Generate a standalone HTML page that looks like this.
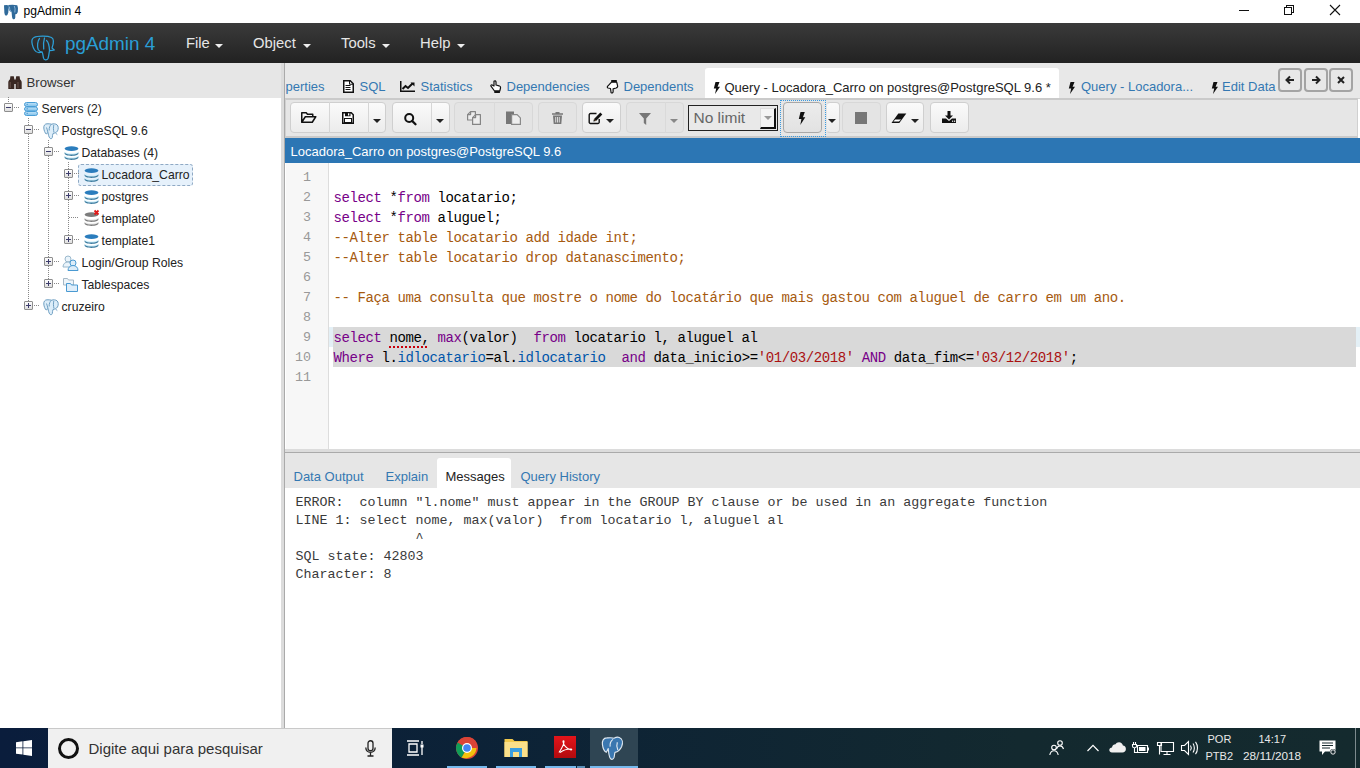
<!DOCTYPE html>
<html><head><meta charset="utf-8">
<style>
*{box-sizing:border-box}
html,body{margin:0;padding:0;width:1360px;height:768px;overflow:hidden;background:#fff;font-family:"Liberation Sans",sans-serif;color:#222}
.a{position:absolute}
.t{position:absolute;white-space:nowrap;line-height:1}
svg{position:absolute;overflow:visible}
/* title bar */
#title{left:0;top:0;width:1360px;height:23px;background:#fff}
/* navbar */
#nav{left:0;top:23px;width:1360px;height:40px;background:linear-gradient(#3a3a3a,#222)}
.menu{color:#e6e6e6;font-size:14.8px;top:13px}
.caret{position:absolute;width:0;height:0;border-left:4px solid transparent;border-right:4px solid transparent;border-top:4px solid #eee}
/* left */
#lhead{left:0;top:63px;width:281px;height:35px;background:#e6e6e6}
#tree{left:0;top:98px;width:281px;height:630px;background:#fff}
.node{font-size:12.2px;color:#222;position:absolute;white-space:nowrap;line-height:1}
.box{position:absolute;width:9px;height:9px;border:1px solid #8e8e8e;border-radius:1px;background:linear-gradient(#fdfdfd,#dedede)}
.box:before{content:"";position:absolute;left:1px;top:3px;width:5px;height:1px;background:#3c3c6c}
.box.p:after{content:"";position:absolute;left:3px;top:1px;width:1px;height:5px;background:#3c3c6c}
.vd{position:absolute;width:1px;background:repeating-linear-gradient(#888 0 1px,transparent 1px 2px)}
.hd{position:absolute;height:1px;background:repeating-linear-gradient(90deg,#888 0 1px,transparent 1px 2px)}
#split{left:281px;top:63px;width:4px;height:665px;background:#dcdcdc;border-right:1px solid #aaa}
/* right */
#tabs{left:285px;top:63px;width:1075px;height:36px;background:#e8e8e8;border-bottom:1px solid #d2d2d2}
.tab{color:#3478b2;font-size:13px;top:80px}
#tb{left:285px;top:98px;width:1073px;height:40px;background:#e6e6e6;border:1px solid #d0d0d0;border-top:2px solid #cacaca;border-bottom:2px solid #cacaca}
.btn{position:absolute;top:102px;height:31px;border:1px solid #cfcfcf;background:linear-gradient(#fafafa,#ececec);border-radius:4px}
.btn.dis{background:#e4e4e4;border-color:#d8d8d8}
.sep{position:absolute;top:102px;width:1px;height:31px;background:#d6d6d6}
.dcaret{position:absolute;width:0;height:0;border-left:4px solid transparent;border-right:4px solid transparent;border-top:4px solid #333}
#blue{left:285px;top:138px;width:1075px;height:25px;background:#2c76b4;color:#fff;font-size:13px}
#editor{left:285px;top:163px;width:1075px;height:286px;background:#fff}
#gutter{left:286px;top:163px;width:43px;height:286px;background:#f7f7f7;border-right:1px solid #ddd}
.code{position:absolute;left:333.5px;font-family:"Liberation Mono",monospace;font-size:14px;letter-spacing:-0.4px;line-height:20px;white-space:pre;color:#000}
.ln{position:absolute;white-space:pre;left:285px;width:26px;text-align:right;font-family:"Liberation Mono",monospace;font-size:13.33px;line-height:20px;color:#999}
.kw{color:#708}.cm{color:#a65a10}.st{color:#a11}.v2{color:#05a}
#sel{left:333px;top:327px;width:1023px;height:40px;background:#d9d9d9}
#rsplit{left:285px;top:449px;width:1075px;height:4px;background:#dcdcdc;border-bottom:1px solid #aaa}
#rtabs{left:285px;top:453px;width:1075px;height:35px;background:#e6e6e6}
.rtab{font-size:13px;color:#3478b2;top:470px}
#msgs{left:285px;top:488px;width:1075px;height:240px;background:#fff}
.msg{position:absolute;left:295.5px;font-family:"Liberation Mono",monospace;font-size:13.33px;line-height:18px;white-space:pre;color:#3a3a3a}
/* taskbar */
#task{left:0;top:728px;width:1360px;height:40px;background:linear-gradient(90deg,#0a1d3c 0%,#0c2237 35%,#13292f 75%,#142a2e 100%)}
#search{left:48px;top:728px;width:344px;height:40px;background:#f0f0f0;border-top:1px solid #c9c9c9}
.tray{color:#e8e8e8;font-size:11px}
</style></head><body>

<!-- TITLE BAR -->
<div id="title" class="a">
  <svg style="left:2.5px;top:3.5px" width="16" height="16" viewBox="0 0 16 16"><g fill="#2f6a9a"><path d="M1 1.3Q4 0.4 5.8 1.5L5.3 8.5Q4.6 11.8 3 11.8 1.8 11.8 1.4 9z"/><path d="M5.5 1Q10 0.2 14.3 1.2 15.6 4 14.8 8 14 10.5 12.3 10.2V13.5Q12 15.6 10.2 15.3 9 14.8 9 12.5L8.6 8.3Q6 7.2 5.5 4z"/></g><path d="M6.4 2.6Q6.3 6 8.3 8M11.3 2Q12.6 4.5 11.8 8.5" fill="none" stroke="#8fb8dc" stroke-width="0.9"/></svg>
  <div class="t" style="left:23.5px;top:5px;font-size:12.1px;color:#000">pgAdmin 4</div>
  <div class="a" style="left:1239px;top:10px;width:10px;height:1px;background:#111"></div>
  <div class="a" style="left:1286px;top:5px;width:8px;height:8px;border:1px solid #111;background:#fff"></div>
  <div class="a" style="left:1284px;top:7px;width:8px;height:8px;border:1px solid #111;background:#fff"></div>
  <svg style="left:1330px;top:5px" width="10" height="10" viewBox="0 0 10 10"><path d="M0 0L10 10M10 0L0 10" stroke="#111" stroke-width="1.1"/></svg>
</div>

<!-- NAVBAR -->
<div id="nav" class="a">
  <svg style="left:30.5px;top:12.5px" width="24" height="25" viewBox="0 0 24 25"><g fill="none" stroke="#2d9fd6" stroke-width="1.25" stroke-linejoin="round" stroke-linecap="round"><path d="M3 1.5C6 0 16-0.5 20.5 1.5 23 3 22.5 8 21 12L23.3 14C22 14.5 20 14.5 18.5 14.5 18 17 17.8 20 17 22.5 16 24.5 13 24.5 12.5 22 12 20 12 17.5 11 16 8 17 5 16.5 3.5 14 1.5 11 0.5 6 1 4 1.3 2.8 2 2 3 1.5z"/><path d="M8.5 2.5C6.5 5 6 10 7.2 13.5 8.5 15.5 10 16 11 16M13.5 2C12.5 5 12.3 9 12.7 13M15.5 4.5C17.3 6 18.3 10 18.5 14.5"/></g></svg>
  <div class="t" style="left:65px;top:12px;font-size:18.9px;color:#2a9fd6">pgAdmin 4</div>
  <div class="t menu" style="left:186px">File</div><div class="caret" style="left:215px;top:21px"></div>
  <div class="t menu" style="left:253px">Object</div><div class="caret" style="left:303px;top:21px"></div>
  <div class="t menu" style="left:341px">Tools</div><div class="caret" style="left:382px;top:21px"></div>
  <div class="t menu" style="left:420px">Help</div><div class="caret" style="left:457px;top:21px"></div>
</div>

<!-- LEFT PANEL -->
<div id="lhead" class="a">
  <svg style="left:8px;top:13px" width="14" height="13" viewBox="0 0 14 13"><g fill="#3a2822"><path d="M0.3 13V6.5C0.3 5 1 4 2 3.2L2.4 0.3h3.4L6.3 3V13z"/><path d="M13.7 13V6.5C13.7 5 13 4 12 3.2L11.6 0.3H8.2L7.7 3V13z"/><rect x="6" y="3.5" width="2" height="4.5"/></g><path d="M2.2 6v6M10 6v6" stroke="#6a554c" stroke-width="1"/></svg>
  <div class="t" style="left:26.5px;top:13px;font-size:13.2px;color:#333">Browser</div>
</div>
<div id="tree" class="a"></div>
<div class="a" id="treeitems">
  <!-- dotted lines -->
  <div class="vd" style="left:8px;top:97px;height:6px"></div>
  <div class="vd" style="left:28px;top:118px;height:188px"></div>
  <div class="vd" style="left:48px;top:140px;height:144px"></div>
  <div class="vd" style="left:68px;top:162px;height:78px"></div>
  <!-- Servers -->
  <div class="box" style="left:4px;top:103px"></div><div class="hd" style="left:14px;top:107px;width:5px"></div>
  <svg style="left:24px;top:102px" width="14" height="14" viewBox="0 0 14 14"><defs><linearGradient id="sg" x1="0" x2="0" y1="0" y2="1"><stop offset="0" stop-color="#c4e4f8"/><stop offset="1" stop-color="#7fc0ea"/></linearGradient></defs><g fill="url(#sg)" stroke="#4a9ed6" stroke-width="1"><rect x="0.5" y="0.5" width="13" height="4" rx="2"/><rect x="0.5" y="5" width="13" height="4" rx="2"/><rect x="0.5" y="9.5" width="13" height="4" rx="2"/></g><path d="M2.5 2.3h1.5M2.5 6.8h1.5M2.5 11.3h1.5" stroke="#3a8ac8" stroke-width="0.8"/></svg>
  <div class="node" style="left:41.5px;top:103px">Servers (2)</div>
  <!-- PostgreSQL -->
  <div class="box" style="left:24px;top:125px"></div><div class="hd" style="left:34px;top:129px;width:5px"></div>
  <svg style="left:43px;top:123px" width="16" height="16" viewBox="0 0 16 16"><g fill="#dcedf9" stroke="#6f9fc2" stroke-width="1" stroke-linejoin="round"><path d="M4 0.8C2 0.8 0.6 2.5 0.8 5S2 10 3.2 11L5 9.5C5.3 11.5 5.8 14 7 15.3 7.8 16 9 15.8 9.3 14.5 9.6 13 9.5 11.5 10 10.5 11.8 10.2 13.5 9.5 14.5 8 15.6 6 15.5 3 14 1.8 12.7 0.7 10.5 0.6 8.5 1.2 7 0.7 5.5 0.8 4 0.8z"/><path d="M8.5 1.2C7 2.5 6 4.5 6.2 7.5M10.8 2C10.2 4.5 10.4 7 11 9.5M12.5 10l1.8 1.6M3.5 4.5c0.5 1.5 1 3 1.5 5" fill="none"/></g></svg>
  <div class="node" style="left:61.5px;top:125px">PostgreSQL 9.6</div>
  <!-- Databases -->
  <div class="box" style="left:44px;top:147px"></div><div class="hd" style="left:54px;top:151px;width:5px"></div>
  <svg style="left:64px;top:146px" width="15" height="14" viewBox="0 0 15 14"><ellipse cx="7.5" cy="2.6" rx="6.9" ry="2.3" fill="#2b7dbd"/><path d="M0.6 5.2c0 1.3 3.1 2.2 6.9 2.2s6.9-0.9 6.9-2.2v1.2c0 1.5-3.1 2.5-6.9 2.5S0.6 7.9 0.6 6.4z" fill="#cdeefb"/><path d="M0.6 6.2c0.3 1.4 3.3 2.4 6.9 2.4s6.6-1 6.9-2.4v1.3c0 1.4-3.1 2.4-6.9 2.4S0.6 8.9 0.6 7.5z" fill="#3a7a9e"/><path d="M0.6 9.2c0 1.3 3.1 2.2 6.9 2.2s6.9-0.9 6.9-2.2v1.2c0 1.5-3.1 2.5-6.9 2.5S0.6 11.9 0.6 10.4z" fill="#cdeefb"/><path d="M0.6 10.2c0.3 1.4 3.3 2.4 6.9 2.4s6.6-1 6.9-2.4v1.3c0 1.4-3.1 2.4-6.9 2.4S0.6 12.9 0.6 11.5z" fill="#3a7a9e"/></svg>
  <div class="node" style="left:81.5px;top:147px">Databases (4)</div>
  <!-- Locadora -->
  <div class="a" style="left:78px;top:164px;width:115px;height:22px;background:#e6f1fb;border:1px dashed #8fa9c4;border-radius:3px"></div>
  <div class="box p" style="left:64px;top:169px"></div><div class="hd" style="left:74px;top:173px;width:5px"></div>
  <svg style="left:84px;top:168px" width="15" height="14" viewBox="0 0 15 14"><ellipse cx="7.5" cy="2.6" rx="6.9" ry="2.3" fill="#2b7dbd"/><path d="M0.6 5.2c0 1.3 3.1 2.2 6.9 2.2s6.9-0.9 6.9-2.2v1.2c0 1.5-3.1 2.5-6.9 2.5S0.6 7.9 0.6 6.4z" fill="#cdeefb"/><path d="M0.6 6.2c0.3 1.4 3.3 2.4 6.9 2.4s6.6-1 6.9-2.4v1.3c0 1.4-3.1 2.4-6.9 2.4S0.6 8.9 0.6 7.5z" fill="#3a7a9e"/><path d="M0.6 9.2c0 1.3 3.1 2.2 6.9 2.2s6.9-0.9 6.9-2.2v1.2c0 1.5-3.1 2.5-6.9 2.5S0.6 11.9 0.6 10.4z" fill="#cdeefb"/><path d="M0.6 10.2c0.3 1.4 3.3 2.4 6.9 2.4s6.6-1 6.9-2.4v1.3c0 1.4-3.1 2.4-6.9 2.4S0.6 12.9 0.6 11.5z" fill="#3a7a9e"/></svg>
  <div class="node" style="left:101.5px;top:169px">Locadora_Carro</div>
  <!-- postgres -->
  <div class="box p" style="left:64px;top:191px"></div><div class="hd" style="left:74px;top:195px;width:5px"></div>
  <svg style="left:84px;top:190px" width="15" height="14" viewBox="0 0 15 14"><ellipse cx="7.5" cy="2.6" rx="6.9" ry="2.3" fill="#2b7dbd"/><path d="M0.6 5.2c0 1.3 3.1 2.2 6.9 2.2s6.9-0.9 6.9-2.2v1.2c0 1.5-3.1 2.5-6.9 2.5S0.6 7.9 0.6 6.4z" fill="#cdeefb"/><path d="M0.6 6.2c0.3 1.4 3.3 2.4 6.9 2.4s6.6-1 6.9-2.4v1.3c0 1.4-3.1 2.4-6.9 2.4S0.6 8.9 0.6 7.5z" fill="#3a7a9e"/><path d="M0.6 9.2c0 1.3 3.1 2.2 6.9 2.2s6.9-0.9 6.9-2.2v1.2c0 1.5-3.1 2.5-6.9 2.5S0.6 11.9 0.6 10.4z" fill="#cdeefb"/><path d="M0.6 10.2c0.3 1.4 3.3 2.4 6.9 2.4s6.6-1 6.9-2.4v1.3c0 1.4-3.1 2.4-6.9 2.4S0.6 12.9 0.6 11.5z" fill="#3a7a9e"/></svg>
  <div class="node" style="left:101.5px;top:191px">postgres</div>
  <!-- template0 -->
  <div class="hd" style="left:69px;top:217px;width:10px"></div>
  <svg style="left:84px;top:212px" width="15" height="14" viewBox="0 0 15 14"><ellipse cx="7.5" cy="2.6" rx="6.9" ry="2.3" fill="#7c7c7c"/><path d="M0.6 5.2c0 1.3 3.1 2.2 6.9 2.2s6.9-0.9 6.9-2.2v1.2c0 1.5-3.1 2.5-6.9 2.5S0.6 7.9 0.6 6.4z" fill="#e6e6e6"/><path d="M0.6 6.2c0.3 1.4 3.3 2.4 6.9 2.4s6.6-1 6.9-2.4v1.3c0 1.4-3.1 2.4-6.9 2.4S0.6 8.9 0.6 7.5z" fill="#7a7a7a"/><path d="M0.6 9.2c0 1.3 3.1 2.2 6.9 2.2s6.9-0.9 6.9-2.2v1.2c0 1.5-3.1 2.5-6.9 2.5S0.6 11.9 0.6 10.4z" fill="#e6e6e6"/><path d="M0.6 10.2c0.3 1.4 3.3 2.4 6.9 2.4s6.6-1 6.9-2.4v1.3c0 1.4-3.1 2.4-6.9 2.4S0.6 12.9 0.6 11.5z" fill="#7a7a7a"/><path d="M10.5 -1.5l4 4M14.5 -1.5l-4 4" stroke="#e01818" stroke-width="1.8"/></svg>
  <div class="node" style="left:101.5px;top:213px">template0</div>
  <!-- template1 -->
  <div class="box p" style="left:64px;top:235px"></div><div class="hd" style="left:74px;top:239px;width:5px"></div>
  <svg style="left:84px;top:234px" width="15" height="14" viewBox="0 0 15 14"><ellipse cx="7.5" cy="2.6" rx="6.9" ry="2.3" fill="#2b7dbd"/><path d="M0.6 5.2c0 1.3 3.1 2.2 6.9 2.2s6.9-0.9 6.9-2.2v1.2c0 1.5-3.1 2.5-6.9 2.5S0.6 7.9 0.6 6.4z" fill="#cdeefb"/><path d="M0.6 6.2c0.3 1.4 3.3 2.4 6.9 2.4s6.6-1 6.9-2.4v1.3c0 1.4-3.1 2.4-6.9 2.4S0.6 8.9 0.6 7.5z" fill="#3a7a9e"/><path d="M0.6 9.2c0 1.3 3.1 2.2 6.9 2.2s6.9-0.9 6.9-2.2v1.2c0 1.5-3.1 2.5-6.9 2.5S0.6 11.9 0.6 10.4z" fill="#cdeefb"/><path d="M0.6 10.2c0.3 1.4 3.3 2.4 6.9 2.4s6.6-1 6.9-2.4v1.3c0 1.4-3.1 2.4-6.9 2.4S0.6 12.9 0.6 11.5z" fill="#3a7a9e"/></svg>
  <div class="node" style="left:101.5px;top:235px">template1</div>
  <!-- Login/Group Roles -->
  <div class="box p" style="left:44px;top:257px"></div><div class="hd" style="left:54px;top:261px;width:5px"></div>
  <svg style="left:62px;top:255px" width="18" height="16" viewBox="0 0 18 16"><g fill="#eaf4fb" stroke="#9ab8cc" stroke-width="1"><circle cx="6" cy="4" r="3"/><path d="M1 12c0-3 2-5 5-5s5 2 5 5z"/></g><g fill="#dcecf8" stroke="#4a9ad2" stroke-width="1"><circle cx="11" cy="8" r="3"/><path d="M6 15.5c0-3 2-5 5-5s5 2 5 5z"/></g></svg>
  <div class="node" style="left:81.5px;top:257px">Login/Group Roles</div>
  <!-- Tablespaces -->
  <div class="box p" style="left:44px;top:279px"></div><div class="hd" style="left:54px;top:283px;width:5px"></div>
  <svg style="left:63px;top:277px" width="15" height="15" viewBox="0 0 15 15"><g fill="#eef5fa" stroke="#a6b8c6" stroke-width="1"><path d="M0.5 1.5h4l1 1.5h5v5h-10z"/></g><g fill="#dfeefa" stroke="#4a9ad2" stroke-width="1"><path d="M3.5 6.5h4l1 1.5h6v6.5h-11z"/></g></svg>
  <div class="node" style="left:81.5px;top:279px">Tablespaces</div>
  <!-- cruzeiro -->
  <div class="box p" style="left:24px;top:301px"></div><div class="hd" style="left:34px;top:305px;width:5px"></div>
  <svg style="left:43px;top:299px" width="16" height="16" viewBox="0 0 16 16"><g fill="#dcedf9" stroke="#6f9fc2" stroke-width="1" stroke-linejoin="round"><path d="M4 0.8C2 0.8 0.6 2.5 0.8 5S2 10 3.2 11L5 9.5C5.3 11.5 5.8 14 7 15.3 7.8 16 9 15.8 9.3 14.5 9.6 13 9.5 11.5 10 10.5 11.8 10.2 13.5 9.5 14.5 8 15.6 6 15.5 3 14 1.8 12.7 0.7 10.5 0.6 8.5 1.2 7 0.7 5.5 0.8 4 0.8z"/><path d="M8.5 1.2C7 2.5 6 4.5 6.2 7.5M10.8 2C10.2 4.5 10.4 7 11 9.5M12.5 10l1.8 1.6M3.5 4.5c0.5 1.5 1 3 1.5 5" fill="none"/></g></svg>
  <div class="node" style="left:61.5px;top:301px">cruzeiro</div>
</div>
<div id="split" class="a"></div>

<!-- RIGHT PANEL -->
<div id="tabs" class="a"></div>
<div class="t tab" style="left:285.5px">perties</div>
<svg style="left:343px;top:80px" width="11" height="13" viewBox="0 0 11 13"><path d="M0.75 0.75h6.5l3 3v8.5h-9.5z" fill="#fff" stroke="#111" stroke-width="1.5"/><path d="M2.5 5.5h5M2.5 7.5h5M2.5 9.5h5" stroke="#111" stroke-width="1"/><path d="M6.5 0.75v3.5h3.5" fill="none" stroke="#111" stroke-width="1"/></svg>
<div class="t tab" style="left:359.5px">SQL</div>
<svg style="left:400px;top:81px" width="15" height="11" viewBox="0 0 15 11"><path d="M0.75 0v10.25H15" fill="none" stroke="#111" stroke-width="1.5"/><path d="M2.5 8l3-3 2.5 2 4.5-4.5" fill="none" stroke="#111" stroke-width="2"/><path d="M10.5 1.5h4v4z" fill="#111"/></svg>
<div class="t tab" style="left:420.5px">Statistics</div>
<svg style="left:490px;top:80px" width="12" height="13" viewBox="0 0 12 13"><path d="M4 1.2c0.8-0.8 2-0.3 2 0.8v3l3 0.8c1 0.3 1.8 1.2 1.5 2.2L9.8 11H4.5L1 6.2c-0.6-0.8 0.4-1.8 1.2-1.3L4 6z" fill="#fff" stroke="#111" stroke-width="1.2" stroke-linejoin="round"/><rect x="4.3" y="10.5" width="5.6" height="2.5" fill="#111"/></svg>
<div class="t tab" style="left:506.5px">Dependencies</div>
<svg style="left:607px;top:80px" width="12" height="13" viewBox="0 0 12 13"><rect x="4.2" y="0" width="5.6" height="2.5" fill="#111"/><path d="M4.5 2.2h5.2l0.9 3.6c0.3 1-0.5 1.9-1.5 2.2l-3 0.8v3c0 1.1-1.2 1.6-2 0.8L3.5 8.5 1 8c-0.9-0.4-0.9-1.4-0.2-1.9z" fill="#fff" stroke="#111" stroke-width="1.2" stroke-linejoin="round"/></svg>
<div class="t tab" style="left:623.5px">Dependents</div>
<div class="a" style="left:705px;top:68px;width:354px;height:31px;background:#fff;border-radius:3px 3px 0 0"></div>
<svg style="left:712.5px;top:82px" width="8" height="12" viewBox="0 0 8 12"><path d="M2.5 0h4L4.6 4.8H7L2 12 3.2 6.5H0.8z" fill="#111"/></svg>
<div class="t tab" style="left:724.5px;top:81px;color:#222">Query - Locadora_Carro on postgres@PostgreSQL 9.6 *</div>
<svg style="left:1068px;top:82px" width="8" height="12" viewBox="0 0 8 12"><path d="M2.5 0h4L4.6 4.8H7L2 12 3.2 6.5H0.8z" fill="#111"/></svg>
<div class="t tab" style="left:1081px">Query - Locadora...</div>
<svg style="left:1210.5px;top:82px" width="8" height="12" viewBox="0 0 8 12"><path d="M2.5 0h4L4.6 4.8H7L2 12 3.2 6.5H0.8z" fill="#111"/></svg>
<div class="a" style="left:1222px;top:70px;width:57px;height:28px;overflow:hidden"><div class="t tab" style="left:0;top:10px">Edit Data - Locadora_Carro</div></div>
<div class="a" style="left:1278px;top:68px;width:23.5px;height:23.5px;border:2px solid #a4a4a4;border-radius:4px;background:#e8e8e8"></div>
<svg style="left:1285px;top:75px" width="10" height="10" viewBox="0 0 10 10"><path d="M9 5H2M5 1.5L1.5 5 5 8.5" fill="none" stroke="#222" stroke-width="2"/></svg>
<div class="a" style="left:1304px;top:68px;width:23.5px;height:23.5px;border:2px solid #a4a4a4;border-radius:4px;background:#e8e8e8"></div>
<svg style="left:1311px;top:75px" width="10" height="10" viewBox="0 0 10 10"><path d="M1 5h7M5 1.5L8.5 5 5 8.5" fill="none" stroke="#222" stroke-width="2"/></svg>
<div class="a" style="left:1329px;top:68px;width:23.5px;height:23.5px;border:2px solid #a4a4a4;border-radius:4px;background:#e8e8e8"></div>
<svg style="left:1337px;top:76px" width="8" height="8" viewBox="0 0 8 8"><path d="M1 1l6 6M7 1L1 7" fill="none" stroke="#222" stroke-width="2"/></svg>


<div id="tb" class="a"></div>
<div class="btn" style="left:290px;width:96px;"></div><div class="sep" style="left:328.5px"></div><div class="sep" style="left:367.5px"></div><svg style="left:300.5px;top:112px" width="16" height="11" viewBox="0 0 16 11"><path d="M0.75 10.25V0.75h4.5l1.2 1.5h5.3v2.3M0.75 10.25h10.5l3.5-5.5H4.3z" fill="none" stroke="#111" stroke-width="1.5" stroke-linejoin="round"/></svg><svg style="left:342px;top:112px" width="12" height="12" viewBox="0 0 12 12"><path d="M0.75 0.75h8.5l2 2v8.5H0.75z" fill="#fff" stroke="#111" stroke-width="1.5"/><rect x="3" y="0.75" width="5.5" height="3.5" fill="#111"/><rect x="6" y="1.3" width="1.3" height="2.2" fill="#fff"/><rect x="2.5" y="6.5" width="7" height="4" fill="#fff" stroke="#111" stroke-width="1"/></svg><div class="dcaret" style="left:373px;top:119px;border-top-color:#222"></div><div class="btn" style="left:392px;width:57.5px;"></div><div class="sep" style="left:430.5px"></div><svg style="left:404px;top:113px" width="13" height="12" viewBox="0 0 13 12"><circle cx="5.2" cy="5" r="4" fill="none" stroke="#111" stroke-width="2"/><path d="M8.2 8l3.3 3.3" stroke="#111" stroke-width="2.3" stroke-linecap="round"/></svg><div class="dcaret" style="left:436px;top:119px;border-top-color:#222"></div><div class="btn dis" style="left:454px;width:78.5px;"></div><div class="sep" style="left:493.5px;background:#dadada"></div><svg style="left:467px;top:111px" width="14" height="14" viewBox="0 0 14 14"><g fill="#ededed" stroke="#858585" stroke-width="1.2" stroke-linejoin="round"><path d="M0.6 3.6L3.6 0.6h4.8v8.4H0.6z"/><path d="M3.6 0.6v3H0.6" fill="none"/><path d="M5.6 6.6l3-3h4.8v9.8H5.6z"/><path d="M8.6 3.6v3h-3" fill="none"/></g></svg><svg style="left:505.5px;top:111px" width="15" height="14" viewBox="0 0 15 14"><path d="M0 0.5h8v3H5.5v9.5H0z" fill="#777"/><path d="M5.6 3.6h5.5l3.3 3.3v6.5H5.6z" fill="#eee" stroke="#8a8a8a" stroke-width="1.2"/></svg><div class="btn dis" style="left:537.5px;width:39.5px;"></div><svg style="left:551.5px;top:112px" width="11" height="12" viewBox="0 0 11 12"><path d="M0 1.3h11v1.5H0zM3.5 0h4v1.5h-4z" fill="#777"/><path d="M1 3.5h9l-0.7 8.5H1.7z" fill="#777"/><path d="M3.7 5v5.5M5.5 5v5.5M7.3 5v5.5" stroke="#e4e4e4" stroke-width="0.9"/></svg><div class="btn" style="left:582px;width:38.5px;"></div><svg style="left:588px;top:111.5px" width="15" height="12" viewBox="0 0 15 12"><path d="M8.5 1.5H2.5a1.3 1.3 0 0 0-1.3 1.3v7.4a1.3 1.3 0 0 0 1.3 1.3h7.4a1.3 1.3 0 0 0 1.3-1.3V7" fill="none" stroke="#111" stroke-width="1.4"/><path d="M12.3 0.6l2 2L8 8.9 5.3 9.6 6 6.9z" fill="#111"/><path d="M6.4 7.6l1 1" stroke="#d9a066" stroke-width="1"/></svg><div class="dcaret" style="left:606px;top:119px;border-top-color:#222"></div><div class="btn dis" style="left:625.5px;width:58.5px;"></div><div class="sep" style="left:665px;background:#dadada"></div><svg style="left:639px;top:112.5px" width="12" height="12" viewBox="0 0 12 12"><path d="M0 0h12L7.2 5.5V12L4.8 10V5.5z" fill="#777"/></svg><div class="dcaret" style="left:670px;top:119px;border-top-color:#888"></div><div class="a" style="left:688px;top:105px;width:90px;height:26px;border:1.5px solid #222;background:#e9e9e9"></div><div class="t" style="left:693.5px;top:110px;font-size:15.5px;color:#666">No limit</div><div class="a" style="left:760px;top:108px;width:16px;height:21px;background:#f4f4f4;border-right:2px solid #111;border-bottom:2px solid #111;border-left:1px solid #ddd;border-top:1px solid #ddd"></div><div class="dcaret" style="left:764px;top:116px;border-top-color:#999;border-left-width:4px;border-right-width:4px"></div><div class="a" style="left:780px;top:100px;width:45.5px;height:36.5px;border:1.5px dotted #3a9ae0"></div><div class="btn" style="left:782.5px;width:39.5px;border-color:#a8a8a8;background:linear-gradient(#ececec,#e2e2e2)"></div><svg style="left:797.5px;top:112px" width="8" height="13" viewBox="0 0 8 13"><path d="M2.5 0h4.3L4.9 5.2H7.3L2.3 13 3.4 7.1H0.8z" fill="#111"/></svg><div class="btn" style="left:825.5px;width:14.5px;border-left-color:#e4e4e4"></div><div class="dcaret" style="left:827.5px;top:119px;border-top-color:#222"></div><div class="btn dis" style="left:841.5px;width:39.0px;"></div><div class="a" style="left:855px;top:112px;width:12px;height:12px;background:#777"></div><div class="btn" style="left:886px;width:38px;"></div><svg style="left:891px;top:112.5px" width="16" height="11" viewBox="0 0 16 11"><path d="M7.3 0.5h8L8.3 10H0.5z" fill="#111"/><path d="M4.2 6.6h5.9L7.9 8.6H2.4z" fill="#fff"/></svg><div class="dcaret" style="left:911px;top:119px;border-top-color:#222"></div><div class="btn" style="left:929.5px;width:39.0px;"></div><svg style="left:942px;top:111px" width="14" height="12" viewBox="0 0 14 12"><path d="M5.5 0h3v4.5h2.5L7 8.5 3 4.5h2.5z" fill="#111"/><path d="M0 7.5h4l3 2.5 3-2.5h4V12H0z" fill="#111"/><rect x="10" y="9.6" width="1.2" height="1.2" fill="#fff"/><rect x="12" y="9.6" width="1.2" height="1.2" fill="#fff"/></svg>

<div id="blue" class="a"><div class="t" style="left:5.5px;top:7px">Locadora_Carro on postgres@PostgreSQL 9.6</div></div>

<div id="editor" class="a"></div>
<div id="gutter" class="a"></div>
<div class="a" style="left:329px;top:327px;width:4px;height:20px;background:#e4f0f6"></div><div class="a" style="left:1356px;top:327px;width:4px;height:20px;background:#e4f0f6"></div>
<div id="sel" class="a"></div>
<div class="code" style="top:168px">
<span class="kw">select</span> *<span class="kw">from</span> locatario;
<span class="kw">select</span> *<span class="kw">from</span> aluguel;
<span class="cm">--Alter table locatario add idade int;</span>
<span class="cm">--Alter table locatario drop datanascimento;</span>

<span class="cm">-- Faça uma consulta que mostre o nome do locatário que mais gastou com aluguel de carro em um ano.</span>

<span class="kw">select</span> nome, <span class="kw">max</span>(valor)  <span class="kw">from</span> locatario l, aluguel al
<span class="kw">Where</span> l.<span class="v2">idlocatario</span>=al.<span class="v2">idlocatario</span>  <span class="kw">and</span> data_inicio&gt;=<span class="st">'01/03/2018'</span> <span class="kw">AND</span> data_fim&lt;=<span class="st">'03/12/2018'</span>;
</div>
<div class="ln" style="top:168px">1
2
3
4
5
6
7
8
9
10
11</div>

<div id="rsplit" class="a"></div>
<div id="rtabs" class="a"></div>
<div class="a" style="left:437px;top:458px;width:74px;height:30px;background:#fff;border-radius:3px 3px 0 0"></div>
<div class="t rtab" style="left:293.5px">Data Output</div>
<div class="t rtab" style="left:385.5px">Explain</div>
<div class="t rtab" style="left:445.5px;color:#222">Messages</div>
<div class="t rtab" style="left:520.5px">Query History</div>
<div id="msgs" class="a"></div>
<div class="msg" style="top:494px">ERROR:  column "l.nome" must appear in the GROUP BY clause or be used in an aggregate function
LINE 1: select nome, max(valor)  from locatario l, aluguel al
               ^
SQL state: 42803
Character: 8</div>

<div class="a" style="left:389px;top:346px;width:40px;height:2px;background:repeating-linear-gradient(90deg,#c8000a 0 2px,transparent 2px 4px)"></div>
<!-- TASKBAR -->
<div id="task" class="a"></div>
<div id="search" class="a"></div>
<svg style="left:16px;top:740px" width="16" height="16" viewBox="0 0 16 16"><path d="M0 2.2l6.5-0.9v6.2H0zM7.3 1.2L16 0v7.5H7.3zM0 8.3h6.5v6.3L0 13.8zM7.3 8.3H16V16l-8.7-1.2z" fill="#fff"/></svg>
<div class="a" style="left:58px;top:737.5px;width:21px;height:21px;border:3px solid #111;border-radius:50%"></div>
<div class="t" style="left:88.5px;top:741px;font-size:15px;color:#333">Digite aqui para pesquisar</div>
<svg style="left:365px;top:740px" width="11" height="17" viewBox="0 0 11 17"><rect x="3" y="0.75" width="5" height="10" rx="2.5" fill="none" stroke="#222" stroke-width="1.3"/><path d="M0.8 7.5c0 3 2 4.8 4.7 4.8s4.7-1.8 4.7-4.8M5.5 12.3v3.5M2.5 16h6" fill="none" stroke="#222" stroke-width="1.3"/></svg>
<svg style="left:407px;top:740px" width="17" height="16" viewBox="0 0 17 16"><g fill="none" stroke="#fff" stroke-width="1.3"><path d="M0 1h12M0 15h12M2 4h8v8H2z"/><path d="M15 1v3M15 6v9"/></g><rect x="13.5" y="4.5" width="3" height="3" fill="#fff"/></svg>
<svg style="left:456px;top:737px" width="22" height="22" viewBox="0 0 22 22"><circle cx="11" cy="11" r="11" fill="#db4437"/><path d="M11 11L1.5 5.5A11 11 0 0 1 20.5 5.5z" fill="#db4437"/><path d="M11 11h9.5A11 11 0 0 1 5.5 20.5z" fill="#f4c20d"/><path d="M11 11L5.5 20.5A11 11 0 0 1 1.5 5.5z" fill="#0f9d58"/><circle cx="11" cy="11" r="5" fill="#fff"/><circle cx="11" cy="11" r="3.8" fill="#4285f4"/></svg>
<svg style="left:504px;top:737px" width="24" height="21" viewBox="0 0 24 21"><path d="M0.5 2h8l2 2h13v16h-23z" fill="#f2c94c"/><path d="M0.5 5h23v15h-23z" fill="#fbe08a"/><path d="M6 11h12v9h-3v-5H9v5H6z" fill="#3a9ee0"/><path d="M9 15h6v5H9z" fill="#fbe08a"/></svg>
<div class="a" style="left:554px;top:736px;width:22px;height:22px;background:linear-gradient(#e3141a,#b20b0e)"></div>
<svg style="left:557px;top:739px" width="16" height="16" viewBox="0 0 16 16"><path d="M2 13.5c2-3 5-8.5 5-11 0-1-1-1-1 0 0 3 4 8 8 8.5 1 0 1-1 0-1-3 0-7.5 0.8-11 3.5" fill="none" stroke="#fff" stroke-width="1.1"/></svg>
<div class="a" style="left:590px;top:728px;width:48px;height:40px;background:#2f4553"></div>
<svg style="left:601px;top:736px" width="25" height="25" viewBox="0 0 26 26"><g fill="#3a77b0" stroke="#dfe8f0" stroke-width="1.2" stroke-linejoin="round"><path d="M6 2C2.5 2 1 5 1.5 9s2 7 4 8c0.8-1.5 1.5-3 2-4 0.3 3 0.5 6 1.5 9s3.5 3 4.5 0.5c0.6-1.7 0.5-4 1-5.5 2.5-0.3 5.5-2.5 7-6 1.5-3.8 1-8-2.5-9.5-2-0.8-4 0-5.5 0.8C11.5 1.5 9 1.8 6 2z"/><path d="M12.5 3.5c-2 1.5-3.5 4-3 7.5M17 6.5c-1 3-0.5 6 0.5 8" fill="none"/></g></svg>
<div class="a" style="left:447px;top:766px;width:40px;height:2px;background:#76b9ed"></div>
<div class="a" style="left:496px;top:766px;width:40px;height:2px;background:#76b9ed"></div>
<div class="a" style="left:545px;top:766px;width:31px;height:2px;background:#76b9ed"></div>
<div class="a" style="left:577px;top:766px;width:8px;height:2px;background:#5a8fb8"></div>
<div class="a" style="left:590px;top:766px;width:48px;height:2px;background:#76b9ed"></div>
<svg style="left:1049px;top:740px" width="16" height="15" viewBox="0 0 16 15"><g fill="none" stroke="#fff" stroke-width="1.1"><circle cx="11" cy="3" r="2.3"/><path d="M7.5 9c0.5-2 2-3 3.5-3s3 1 3.5 3"/><circle cx="5" cy="7.5" r="2.3"/><path d="M0.8 15c0.4-2.5 2-4.3 4.2-4.3s3.8 1.8 4.2 4.3"/></g></svg>
<svg style="left:1087px;top:744px" width="12" height="8" viewBox="0 0 12 8"><path d="M0.5 7L6 1.3 11.5 7" fill="none" stroke="#fff" stroke-width="1.2"/></svg>
<svg style="left:1108.5px;top:742px" width="17" height="11" viewBox="0 0 17 11"><path d="M3 10.5c-1.6 0-2.7-1-2.7-2.5S1.5 5.5 3 5.5c0.3-2 1.8-3.2 3.5-3.2 0.6-1.3 2-2 3.5-2 2 0 3.6 1.4 3.9 3.3 1.8 0.2 3 1.5 3 3.3 0 2-1.5 3.6-3.5 3.6z" fill="#f0f0f0"/></svg>
<svg style="left:1133px;top:742px" width="16" height="11" viewBox="0 0 16 11"><g fill="none" stroke="#fff" stroke-width="1.1"><path d="M4.5 3.5h10v7h-10z"/><path d="M2.5 0v2.5M0.5 0v2.5M-0.5 2.5h4v1.5c0 1-0.8 1.8-1.8 1.8h-0.4c-1 0-1.8-0.8-1.8-1.8zM1.5 6v4.5h3"/></g><rect x="6" y="5" width="6.5" height="4" fill="#fff"/><rect x="15" y="5.5" width="1" height="3" fill="#fff"/></svg>
<svg style="left:1157px;top:742px" width="17" height="13" viewBox="0 0 17 13"><g fill="none" stroke="#fff" stroke-width="1.1"><path d="M4 0.5h12.5v9H4zM10 9.5v2.5M6.5 12.5h7"/><path d="M0.5 0.5h4v3h-4zM2.5 3.5v9"/></g></svg>
<svg style="left:1180.5px;top:741px" width="17" height="14" viewBox="0 0 17 14"><g fill="none" stroke="#fff" stroke-width="1.1"><path d="M0.5 4.5h3l4-4v13l-4-4h-3z"/><path d="M9.5 4.5c1 1.5 1 3.5 0 5M12 2.5c1.8 2.5 1.8 6.5 0 9M14.5 0.8c2.6 3.5 2.6 8.9 0 12.4"/></g></svg>
<div class="t tray" style="left:1207.5px;top:734px">POR</div>
<div class="t tray" style="left:1205.5px;top:751px">PTB2</div>
<div class="t tray" style="left:1258.5px;top:734px">14:17</div>
<div class="t tray" style="left:1243px;top:751px;font-size:11.8px">28/11/2018</div>
<svg style="left:1318.5px;top:740px" width="18" height="16" viewBox="0 0 18 16"><path d="M0.5 0.5h16v11H6l-3 3.5v-3.5H0.5z" fill="#fff"/><path d="M3 3h11M3 5.5h11M3 8h8" stroke="#1a2b30" stroke-width="1"/><circle cx="14" cy="12" r="3" fill="#1a2b30"/><circle cx="14" cy="12" r="2.2" fill="none" stroke="#fff" stroke-width="0.9"/></svg>
<div class="a" style="left:1355px;top:728px;width:1px;height:40px;background:#7d8a8e"></div>

</body></html>
